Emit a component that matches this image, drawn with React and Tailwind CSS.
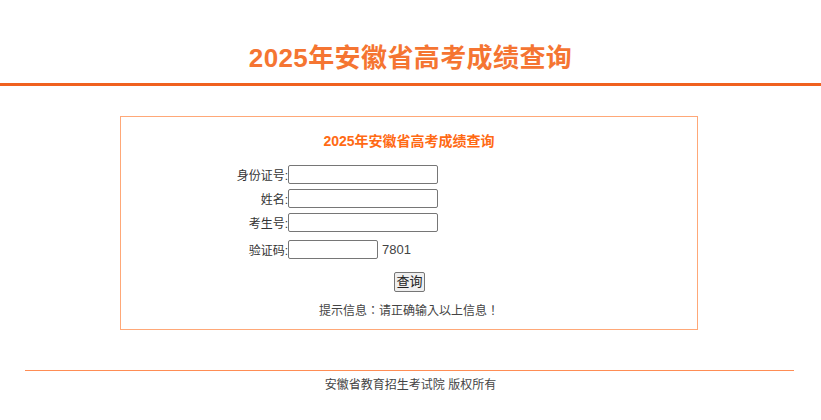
const font = { fontFamily: '"Liberation Sans", "Noto Sans CJK SC", sans-serif' };
const tcFont = { fontFamily: '"Liberation Sans", "Noto Sans CJK TC", sans-serif' };

const rows = [
    { label: "身份证号:", width: "w-[150px]" },
    { label: "姓名:", width: "w-[150px]" },
    { label: "考生号:", width: "w-[150px]" },
];

export default function App() {
    return (
        <div className="min-h-[420px] bg-white text-[#333]" style={font}>
            <div className="h-[86px] border-b-[3px] border-[#f0611f] flex items-center justify-center">
                <h1 className="text-[26px] font-bold text-[#f57532] tracking-[0.4px] pt-[34px]">
                    2025年安徽省高考成绩查询
                </h1>
            </div>

            <div className="ml-[120px] mt-[30px] w-[578px] h-[214px] border border-[#ffa878]">
                <div className="text-center text-[14px] font-bold text-[#ff6a14] mt-[14px] leading-[20px]">
                    2025年安徽省高考成绩查询
                </div>

                <div className="mt-[14px] flex flex-col gap-[5px]">
                    {rows.map((r) => (
                        <div key={r.label} className="flex items-center h-[19px]">
                            <span className="w-[167px] text-right text-[12px] leading-[19px] pt-[4px]">
                                {r.label}
                            </span>
                            <input
                                className={`${r.width} h-[19px] border border-[#767676] rounded-[2px] bg-white`}
                            />
                        </div>
                    ))}
                    <div className="flex items-center h-[19px] mt-[3px]">
                        <span className="w-[167px] text-right text-[12px] leading-[19px] pt-[4px]">
                            验证码:
                        </span>
                        <input className="w-[90px] h-[19px] border border-[#767676] rounded-[2px] bg-white" />
                        <span className="ml-[4px] text-[13px] text-[#444]">7801</span>
                    </div>
                </div>

                <div className="flex justify-center mt-[13px] pl-[1px]">
                    <button className="h-[20px] px-[1px] text-[13px] leading-[16px] border border-[#767676] rounded-[2px] bg-[#efefef] text-[#222]">
                        查询
                    </button>
                </div>

                <div className="text-center text-[12px] mt-[10px] text-[#444]" style={tcFont}>
                    提示信息：请正确输入以上信息！
                </div>
            </div>

            <div className="ml-[25px] w-[769px] mt-[40px] border-t border-[#ff8d55]"></div>
            <div className="text-center text-[12px] mt-[5px] text-[#444]">
                安徽省教育招生考试院 版权所有
            </div>
        </div>
    );
}
